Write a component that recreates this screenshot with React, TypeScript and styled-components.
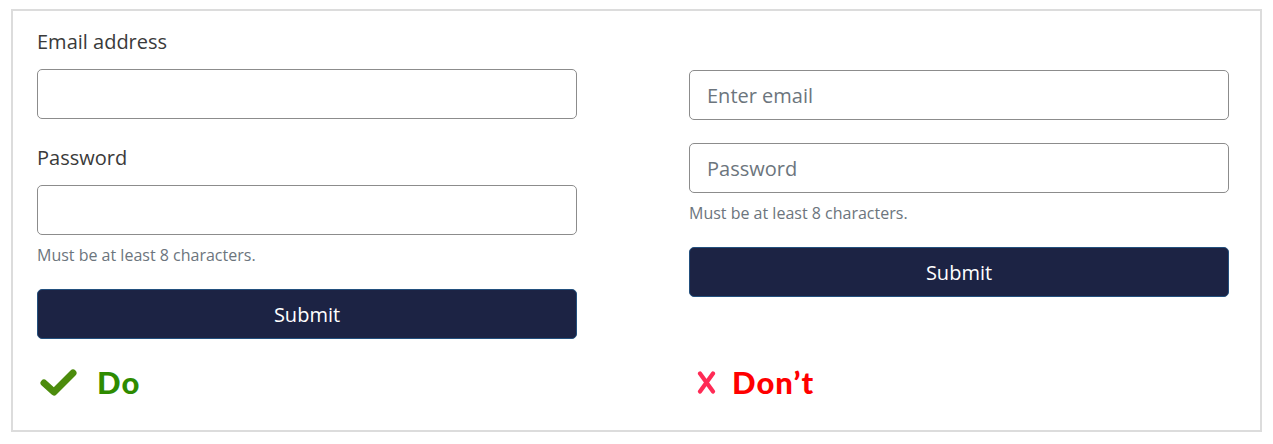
import React from "react";
import styled, { createGlobalStyle } from "styled-components";

const Global = createGlobalStyle`
  html, body { margin: 0; padding: 0; background: #fff; }
  body { font-family: "Open Sans", "Noto Sans", sans-serif; }
  * { box-sizing: border-box; }
`;

const Frame = styled.div`
  margin: 9px 11px 0 11px;
  height: 423px;
  border: 2px solid #dcdcdc;
  padding: 17px 34px 0 24px;
  display: grid;
  grid-template-columns: 540px 540px;
  column-gap: 112px;
`;

const Column = styled.div<{ $top?: number }>`
  display: flex;
  flex-direction: column;
  padding-top: ${(p) => p.$top ?? 0}px;
  height: 100%;
`;

const Label = styled.label`
  font-size: 20px;
  line-height: 28px;
  color: #3a3a3a;
  margin-bottom: 13px;
`;

const Input = styled.input<{ $gap?: number }>`
  width: 100%;
  height: 50px;
  border: 1px solid #8c8c8c;
  border-radius: 5px;
  padding: 0 17px;
  font-family: inherit;
  font-size: 20px;
  color: #333;
  background: #fff;
  margin-bottom: ${(p) => p.$gap ?? 0}px;
  &::placeholder { color: #6c757d; }
`;

const Hint = styled.div<{ $top: number; $bottom: number }>`
  font-size: 16px;
  line-height: 22px;
  color: #6c757d;
  margin-top: ${(p) => p.$top}px;
  margin-bottom: ${(p) => p.$bottom}px;
`;

const SubmitButton = styled.button`
  width: 100%;
  height: 50px;
  background: #1c2344;
  border: 1px solid #23507e;
  border-radius: 5px;
  color: #fff;
  font-family: inherit;
  font-size: 20px;
`;

const Verdict = styled.div<{ $color: string; $gap: number }>`
  margin-top: auto;
  margin-bottom: 31px;
  display: flex;
  align-items: center;
  gap: ${(p) => p.$gap}px;
  font-family: Lato, "Open Sans", sans-serif;
  font-weight: 900;
  font-size: 31px;
  line-height: 34px;
  letter-spacing: 1px;
  color: ${(p) => p.$color};
`;

const IconBox = styled.span<{ $left: number }>`
  display: inline-flex;
  margin-left: ${(p) => p.$left}px;
`;

const Check = () => (
  <svg width="37" height="29" viewBox="0 0 37 29">
    <path d="M4 15 L14 24 L33 5" fill="none" stroke="#4c8c0c" strokeWidth="7" strokeLinecap="round" strokeLinejoin="round" />
  </svg>
);

const Cross = () => (
  <svg width="19" height="23" viewBox="0 0 19 23">
    <path d="M3 2.5 L16 20.5 M16 2.5 L3 20.5" fill="none" stroke="#ff2b55" strokeWidth="4.2" strokeLinecap="round" />
  </svg>
);

export default function App() {
  return (
    <>
      <Global />
      <Frame>
        <Column>
          <Label>Email address</Label>
          <Input $gap={25} />
          <Label>Password</Label>
          <Input />
          <Hint $top={9} $bottom={23}>Must be at least 8 characters.</Hint>
          <SubmitButton>Submit</SubmitButton>
          <Verdict $color="#2e8b00" $gap={20}>
            <IconBox $left={3}><Check /></IconBox>
            Do
          </Verdict>
        </Column>
        <Column $top={42}>
          <Input placeholder="Enter email" $gap={23} />
          <Input placeholder="Password" />
          <Hint $top={9} $bottom={23}>Must be at least 8 characters.</Hint>
          <SubmitButton>Submit</SubmitButton>
          <Verdict $color="#ff0000" $gap={16}>
            <IconBox $left={8}><Cross /></IconBox>
            Don’t
          </Verdict>
        </Column>
      </Frame>
    </>
  );
}
